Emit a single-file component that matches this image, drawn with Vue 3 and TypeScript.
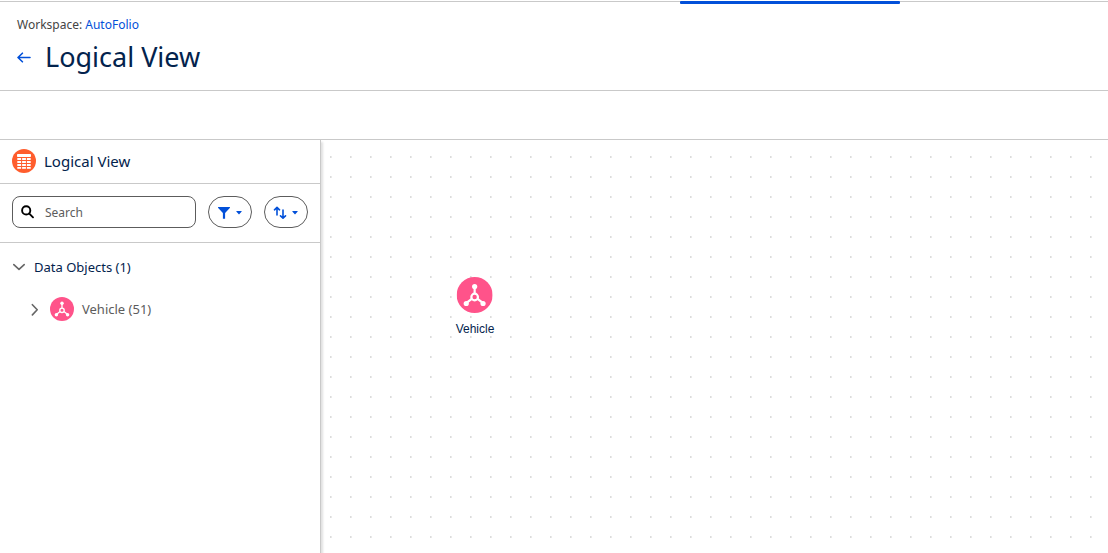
<script setup lang="ts">
import { ref } from 'vue'

interface DataObject {
  name: string
  count: number
  x: number
  y: number
}

const query = ref('')
const expanded = ref(true)
const objects: DataObject[] = [{ name: 'Vehicle', count: 51, x: 154, y: 137 }]
</script>

<template>
  <div class="page">
    <div class="tab-strip"><span class="active-tab"></span></div>

    <header class="page-header">
      <div class="crumb">Workspace: <a href="#workspace">AutoFolio</a></div>
      <div class="title-row">
        <a class="back" href="#back" aria-label="Back">
          <svg width="14" height="14" viewBox="0 0 14 14" fill="none" stroke="currentColor" stroke-width="1.6" stroke-linecap="round" stroke-linejoin="round">
            <path d="M13 7.5H1.2M5.4 3.2L1 7.5l4.4 4.3" />
          </svg>
        </a>
        <h1>Logical View</h1>
      </div>
    </header>

    <div class="toolbar"></div>

    <div class="body">
      <aside class="sidebar">
        <div class="side-head">
          <svg width="24" height="24" viewBox="0 0 24 24">
            <circle cx="12" cy="12" r="12" fill="#ff5d2d" />
            <g fill="#fff">
              <rect x="5" y="5" width="14" height="3" rx="0.7" />
              <rect x="5.3" y="9" width="3.8" height="2" />
              <rect x="10.1" y="9" width="3.8" height="2" />
              <rect x="14.9" y="9" width="3.8" height="2" />
              <rect x="5.3" y="12" width="3.8" height="2" />
              <rect x="10.1" y="12" width="3.8" height="2" />
              <rect x="14.9" y="12" width="3.8" height="2" />
              <rect x="5.3" y="15" width="3.8" height="2" />
              <rect x="10.1" y="15" width="3.8" height="2" />
              <rect x="14.9" y="15" width="3.8" height="2" />
              <rect x="5.3" y="18" width="3.8" height="1.8" />
              <rect x="10.1" y="18" width="3.8" height="1.8" />
              <rect x="14.9" y="18" width="3.8" height="1.8" />
            </g>
          </svg>
          <h2>Logical View</h2>
        </div>

        <div class="filters">
          <label class="search">
            <svg width="14" height="14" viewBox="0 0 14 14" fill="none" stroke="#000" stroke-width="1.9">
              <circle cx="5.2" cy="5.4" r="4.1" />
              <path d="M8.3 8.6l3.7 3.7" stroke-linecap="round" />
            </svg>
            <input v-model="query" type="text" placeholder="Search" aria-label="Search" />
          </label>
          <button type="button" class="pill" aria-label="Filter">
            <svg width="26" height="14" viewBox="0 0 26 14" fill="currentColor">
              <path d="M1.2 2h11.6q.5.3 0 .9L8.1 8v5.8H5.9V8L1.2 2.9q-.5-.6 0-.9z" />
              <path d="M19.5 6h5q.4.3 0 .7L22 9.6l-2.5-2.9q-.4-.4 0-.7z" />
            </svg>
          </button>
          <button type="button" class="pill" aria-label="Sort">
            <svg width="26" height="14" viewBox="0 0 26 14">
              <g fill="none" stroke="currentColor" stroke-width="1.6" stroke-linecap="round" stroke-linejoin="round">
                <path d="M4 10V2.5M1.5 4.8L4 2.4l2.5 2.4M10 5v8M7.5 10.8l2.5 2.4 2.5-2.4" />
              </g>
              <path fill="currentColor" d="M19.5 6h5q.4.3 0 .7L22 9.6l-2.5-2.9q-.4-.4 0-.7z" />
            </svg>
          </button>
        </div>

        <div class="tree">
          <button type="button" class="group" :aria-expanded="expanded" @click="expanded = !expanded">
            <svg width="14" height="14" viewBox="0 0 14 14" fill="none" stroke="#666" stroke-width="1.6" stroke-linecap="round" stroke-linejoin="round">
              <path d="M1.8 4.6L7 9.4l5.2-4.8" />
            </svg>
            <span>Data Objects ({{ objects.length }})</span>
          </button>
          <template v-if="expanded">
            <button v-for="o in objects" :key="o.name" type="button" class="item">
              <svg width="14" height="14" viewBox="0 0 14 14" fill="none" stroke="#666" stroke-width="1.6" stroke-linecap="round" stroke-linejoin="round">
                <path d="M4.4 2.7L9.2 7.8l-4.8 5.1" />
              </svg>
              <svg width="24" height="24" viewBox="0 0 36 36">
                <circle cx="18" cy="18" r="18" fill="#ff538a" />
                <g fill="none" stroke="#fff" stroke-width="2">
                  <circle cx="18" cy="20" r="3.3" />
                  <path d="M18 16.7V9.5M15.1 21.8l-5.6 4.4M20.9 21.8l5.6 4.4" />
                </g>
                <g fill="#fff">
                  <circle cx="18" cy="9.5" r="2.6" />
                  <circle cx="9.6" cy="26.5" r="2.6" />
                  <circle cx="26.4" cy="26.5" r="2.6" />
                </g>
              </svg>
              <span>{{ o.name }} ({{ o.count }})</span>
            </button>
          </template>
        </div>
      </aside>

      <main class="canvas">
        <svg class="grid" width="100%" height="100%" aria-hidden="true">
          <defs>
            <pattern id="dots" x="9" y="16" width="20" height="20" patternUnits="userSpaceOnUse">
              <rect width="1" height="2" fill="#dcdcdc" />
              <rect x="1" width="1" height="2" fill="#eaeaea" />
            </pattern>
          </defs>
          <rect width="100%" height="100%" fill="url(#dots)" />
        </svg>
        <div v-for="o in objects" :key="o.name" class="node" :style="{ left: o.x + 'px', top: o.y + 'px' }">
          <svg width="36" height="36" viewBox="0 0 36 36">
            <circle cx="18" cy="18" r="18" fill="#ff538a" />
            <g fill="none" stroke="#fff" stroke-width="2.2">
              <circle cx="18" cy="20" r="3.3" />
              <path d="M18 16.7V9.5M15.1 21.8l-5.6 4.4M20.9 21.8l5.6 4.4" />
            </g>
            <g fill="#fff">
              <circle cx="18" cy="9.5" r="2.6" />
              <circle cx="9.6" cy="26.5" r="2.6" />
              <circle cx="26.4" cy="26.5" r="2.6" />
            </g>
          </svg>
          <span>{{ o.name }}</span>
        </div>
      </main>
    </div>
  </div>
</template>

<style>
body {
  margin: 0;
}
</style>

<style scoped>
.page {
  display: flex;
  flex-direction: column;
  min-height: 100vh;
  background: #fff;
  color: #03234d;
  font-family: "Segoe UI", "Noto Sans", "Open Sans", sans-serif;
  font-size: 13px;
}
.tab-strip {
  display: flex;
  height: 4px;
  background: linear-gradient(#c9c9c9, #c9c9c9) 0 1px / 100% 1px no-repeat;
}
.active-tab {
  width: 220px;
  height: 3px;
  margin: 1px 0 0 680px;
  border-radius: 1px;
  background: #0250d9;
}
.page-header {
  padding: 11px 17px 13px;
  border-bottom: 1px solid #c9c9c9;
}
.crumb {
  color: #444;
  font-size: 12px;
  line-height: 20px;
}
a {
  color: #0250d9;
  text-decoration: none;
}
.title-row {
  display: flex;
  align-items: center;
  gap: 14px;
  margin-top: 2px;
}
.back {
  display: flex;
}
h1,
h2 {
  margin: 0;
  font-weight: 400;
}
h1 {
  font-size: 27px;
  line-height: 40px;
}
h2 {
  font-size: 15px;
  line-height: 24px;
}
.toolbar {
  height: 48px;
  border-bottom: 1px solid #c9c9c9;
}
.body {
  display: flex;
  flex: 1;
}
.sidebar {
  z-index: 1;
  box-sizing: border-box;
  width: 321px;
  flex: none;
  border-right: 1px solid #c9c9c9;
  box-shadow: 2px 2px 2px rgba(0, 0, 0, 0.12);
}
.side-head {
  display: flex;
  align-items: center;
  gap: 8px;
  padding: 9px 12px 10px;
  border-bottom: 1px solid #c9c9c9;
}
.filters {
  display: flex;
  gap: 12px;
  padding: 12px 12px 14px;
  border-bottom: 1px solid #c9c9c9;
}
.search {
  display: flex;
  flex: 1;
  align-items: center;
  gap: 10px;
  min-width: 0;
  box-sizing: border-box;
  height: 32px;
  padding: 0 8px;
  border: 1px solid #5c5c5c;
  border-radius: 8px;
}
.search svg {
  flex: none;
}
.search input {
  flex: 1;
  min-width: 0;
  padding: 0;
  border: 0;
  outline: 0;
  background: transparent;
  color: #2e2e2e;
  font: inherit;
  font-size: 12px;
}
.search input::placeholder {
  color: #5c5c5c;
  opacity: 1;
}
button {
  padding: 0;
  border: 0;
  background: none;
  color: inherit;
  font: inherit;
  cursor: pointer;
}
.pill {
  display: flex;
  align-items: center;
  justify-content: center;
  box-sizing: border-box;
  width: 44px;
  height: 32px;
  border: 1px solid #5c5c5c;
  border-radius: 16px;
  color: #0250d9;
}
.tree {
  display: flex;
  flex-direction: column;
  align-items: flex-start;
  gap: 18px;
  padding: 12px;
}
.group,
.item {
  display: flex;
  align-items: center;
  gap: 8px;
  height: 24px;
}
.item {
  margin-left: 16px;
  color: #5c5c5c;
}
.canvas {
  position: relative;
  flex: 1;
}
.grid {
  position: absolute;
  inset: 0;
}
.node {
  position: absolute;
  display: flex;
  flex-direction: column;
  align-items: center;
  gap: 8px;
  transform: translateX(-50%);
  font-family: "Liberation Sans", Arial, sans-serif;
  font-size: 12px;
  line-height: 16px;
}
</style>
